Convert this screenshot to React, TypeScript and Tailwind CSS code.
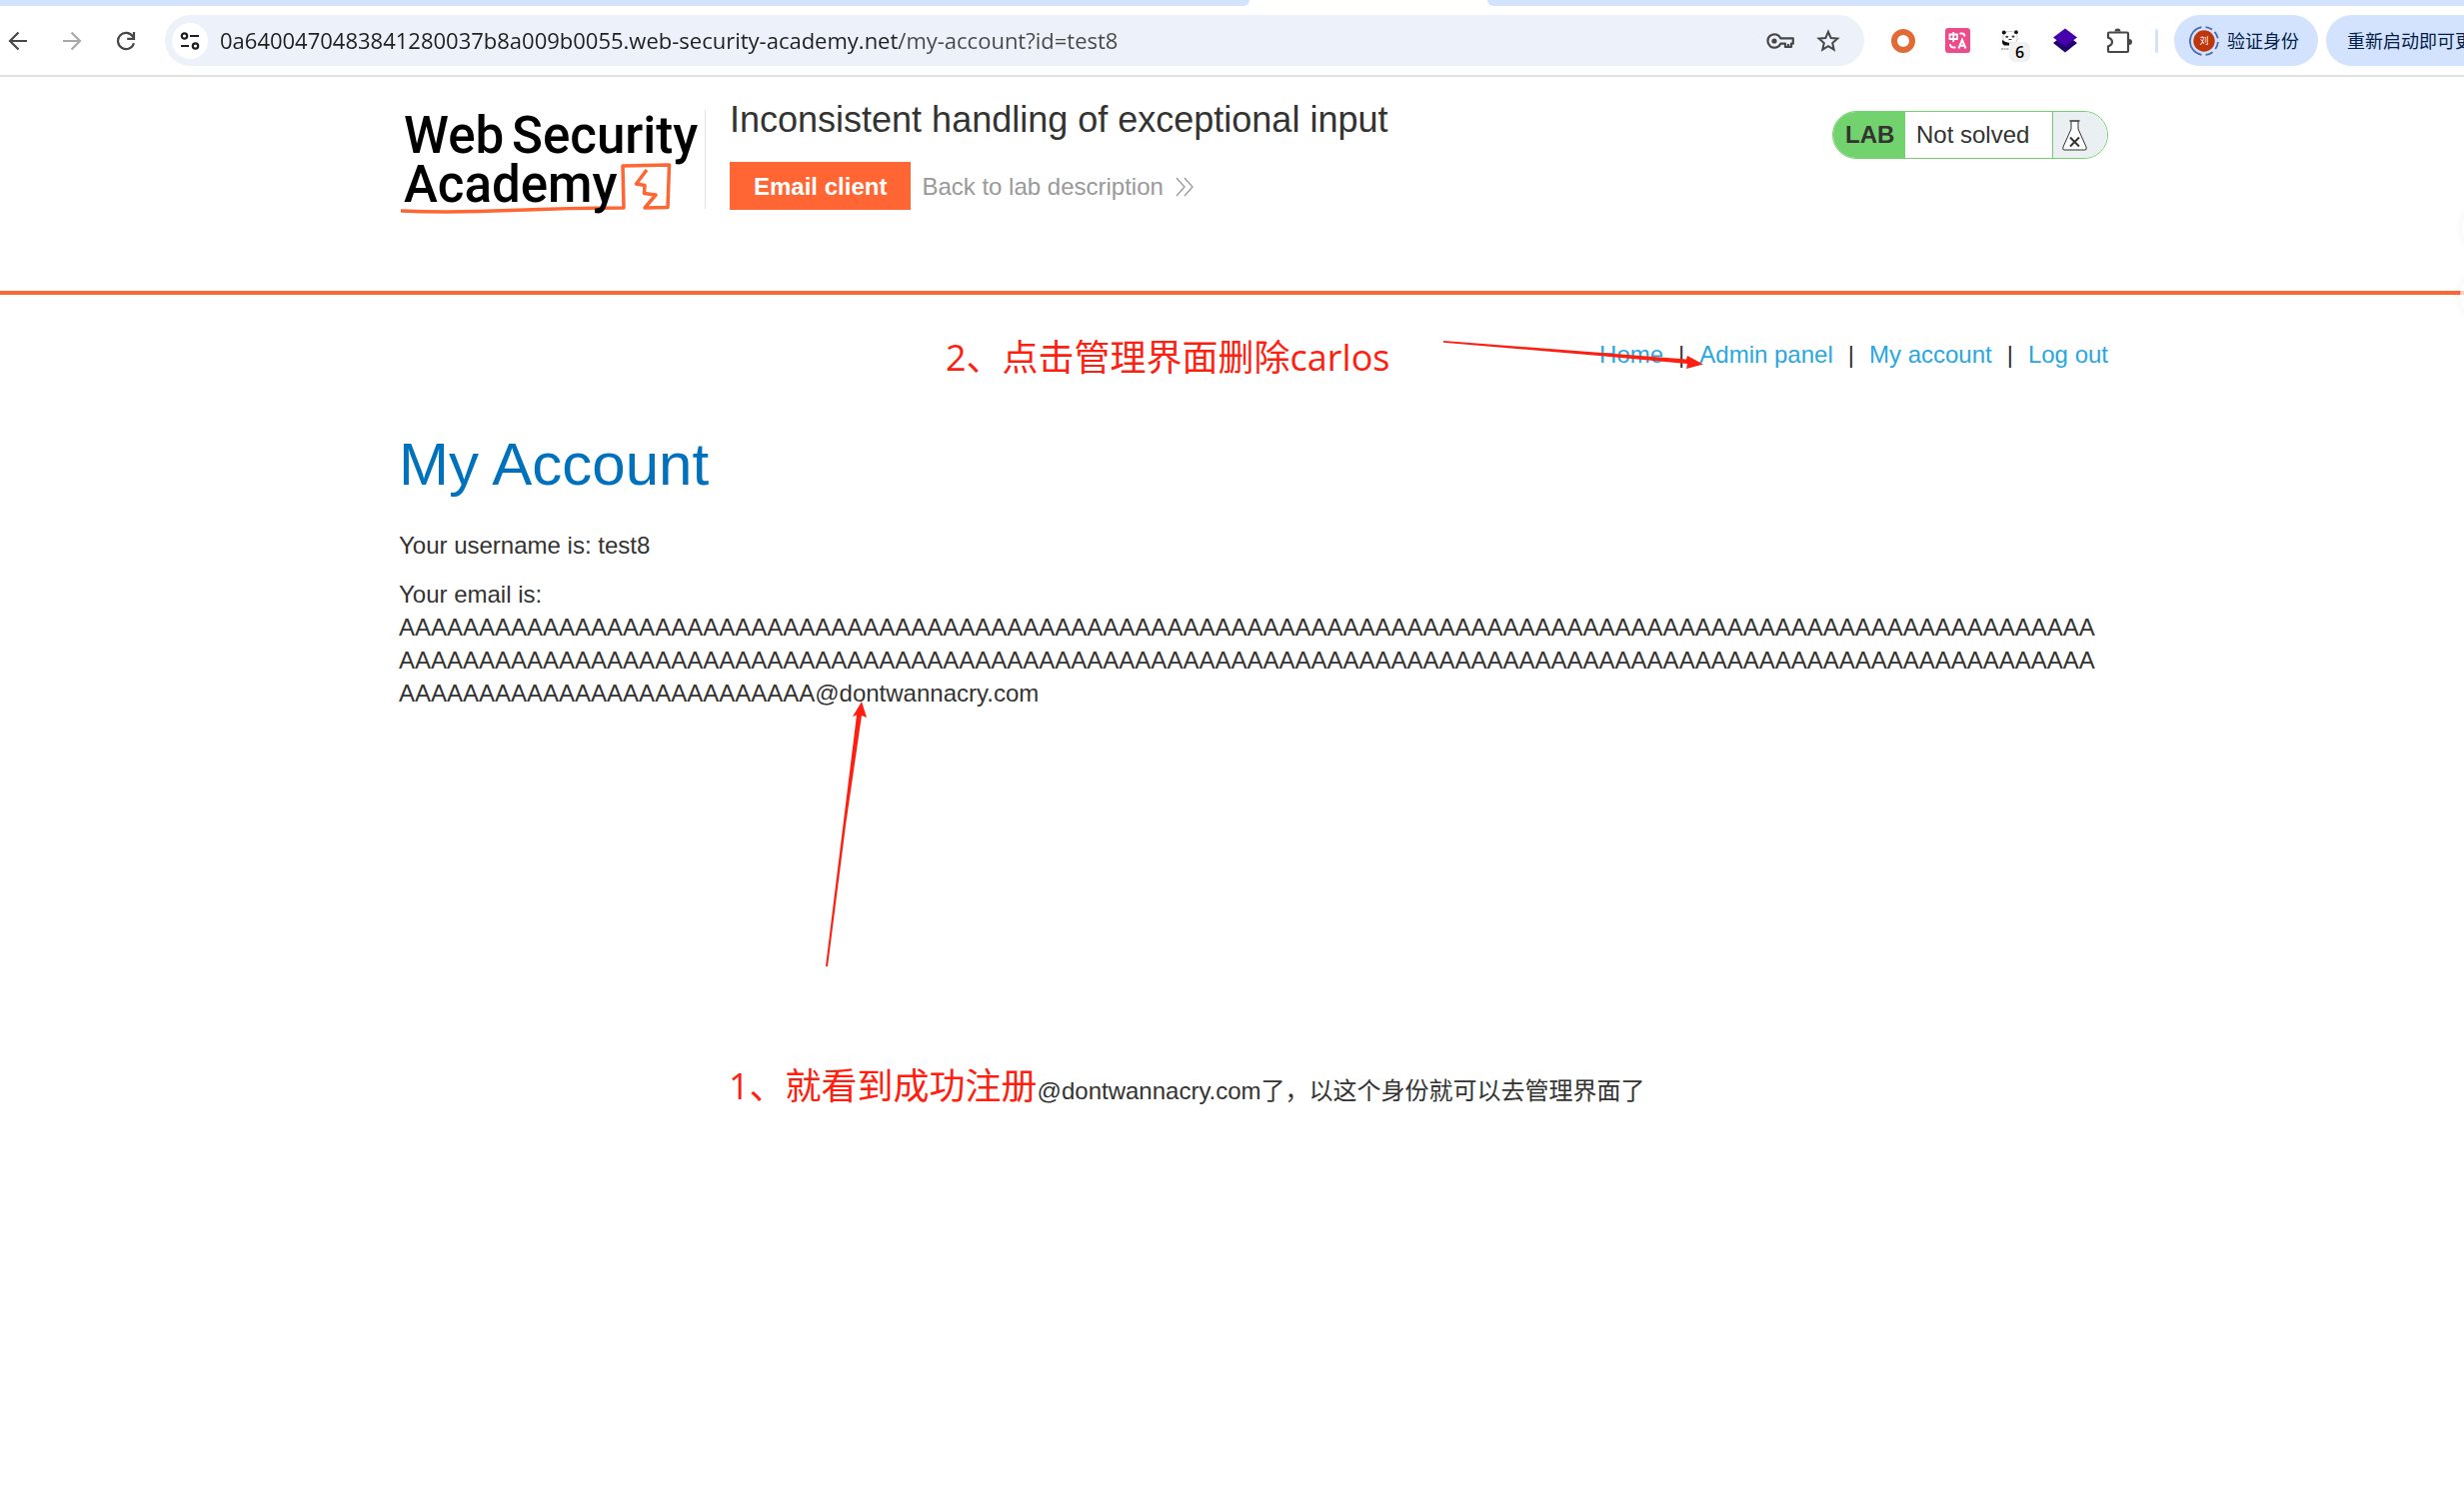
import { ReactNode } from 'react';

const EMAIL = 'A'.repeat(238) + '@dontwannacry.com';

const NAV_LINKS = ['Home', 'Admin panel', 'My account', 'Log out'];

function ToolbarButton({ label, children }: { label: string; children: ReactNode }) {
  return (
    <button aria-label={label} className="flex size-9 shrink-0 items-center justify-center">
      {children}
    </button>
  );
}

function BackIcon() {
  return (
    <svg width="20" height="20" viewBox="0 0 20 20" fill="none" stroke="#474747" strokeWidth="2.2">
      <path d="M19 10H2.5M10.5 1.5 2 10l8.5 8.5" />
    </svg>
  );
}

function ForwardIcon() {
  return (
    <svg width="20" height="20" viewBox="0 0 20 20" fill="none" stroke="#a9a9a9" strokeWidth="2.2">
      <path d="M1 10h16.5M9.5 1.5 18 10l-8.5 8.5" />
    </svg>
  );
}

function ReloadIcon() {
  return (
    <svg width="20" height="20" viewBox="0 0 20 20" fill="none" stroke="#474747" strokeWidth="2.2">
      <path d="M17.9 12.2A8.1 8.1 0 1 1 16.8 5.4L18 7.2" />
      <path d="M18 1v6.8h-6.8" />
    </svg>
  );
}

function TuneIcon() {
  return (
    <svg width="20" height="20" viewBox="0 0 20 20" fill="none" stroke="#1f1f1f" strokeWidth="2.2">
      <circle cx="4.5" cy="5" r="2.7" />
      <path d="M10 5h9M1 15h8" />
      <circle cx="15.5" cy="15" r="2.7" />
    </svg>
  );
}

function KeyIcon() {
  return (
    <svg width="28" height="16" viewBox="0 0 28 16" fill="none" stroke="#474747" strokeWidth="2.2">
      <path d="M14.3 5.3A6.7 6.7 0 1 0 14.3 10.7H19V14h6v-3.3h1.8V5.3Z" strokeLinejoin="round" />
      <path d="M22 14v-3" />
      <circle cx="8" cy="8" r="2.6" fill="#474747" stroke="none" />
    </svg>
  );
}

function StarIcon() {
  return (
    <svg width="24" height="24" viewBox="0 0 24 24" fill="none" stroke="#474747" strokeWidth="2">
      <path d="M12 2.8l2.6 6.2 6.7.6-5.1 4.4 1.500 6.600-5.700-3.500-5.700 3.500 1.500-6.600-5.100-4.400 6.700-.6Z" />
    </svg>
  );
}

function TranslateIcon() {
  return (
    <svg width="25" height="25" viewBox="0 0 25 25" fill="none" stroke="#fff" strokeWidth="1.8">
      <rect width="25" height="25" rx="3" fill="#ee4b8b" stroke="none" />
      <path d="M4.5 6.5h7.5v4.5H4.5ZM8.2 4v10" />
      <path d="M13.5 20.5 17 12l3.5 8.5M14.7 17.7h4.6" strokeWidth="2" />
      <path d="M14.5 5.5h2.5q2.5 0 2.5 3M5 16q0 3.5 3 3.5h2.5" />
    </svg>
  );
}

function PandaIcon() {
  return (
    <svg width="18" height="21" viewBox="0 0 18 21">
      <path d="M2 5Q3 1.5 9 1.5T16 5q1 6-2 8H5Q1 11 2 5Z" fill="#fff" stroke="#b5b5b5" strokeWidth=".7" />
      <circle cx="2.8" cy="2.4" r="2" fill="#111" />
      <circle cx="15" cy="2.2" r="1.9" fill="#111" />
      <ellipse cx="5.8" cy="6.8" rx="1.6" ry="1.1" fill="#444" />
      <ellipse cx="12" cy="6.6" rx="1.6" ry="1.1" fill="#444" />
      <path d="M7.5 9.5h3" stroke="#333" />
      <path d="M1 10q2 2 7 3v2.5H3Q.5 14 1 10Z" fill="#111" />
      <path d="M0 19h8" stroke="#777" strokeWidth="1.2" strokeDasharray="2 .6" />
    </svg>
  );
}

function LayersIcon() {
  return (
    <svg width="26" height="25" viewBox="0 0 26 25">
      <path d="M1 15 13 6l12 9-12 9.5Z" fill="#23006e" />
      <path d="M1 9.5 13 .5l12 9-12 9Z" fill="#4500ad" />
    </svg>
  );
}

function PuzzleIcon() {
  return (
    <svg width="26" height="26" viewBox="0 0 26 26" fill="none" stroke="#474747" strokeWidth="2.2">
      <path
        d="M3 4.5h18q1 0 1 1V23q0 1-1 1H3q-1 0-1-1v-4.6q4-1.3 4-4.400t-4-4.400V5.500q0-1 1-1Z"
        strokeLinejoin="round"
      />
      <path d="M8.500 3.500a3 3 0 0 1 6 0ZM23 11a3 3 0 0 1 0 6Z" fill="#474747" stroke="none" />
    </svg>
  );
}

function Avatar() {
  return (
    <span className="relative flex size-[30px] items-center justify-center">
      <svg className="absolute inset-0" width="30" height="30" viewBox="0 0 30 30" fill="none">
        <path d="M12.5 1.2a14 14 0 0 0 0 27.6" stroke="#4a6cae" strokeWidth="1.8" />
        <path
          d="M16.5 1.1a14 14 0 0 1 6.500 2.500M25.500 5.800a14 14 0 0 1 3.300 6.500M28.900 16a14 14 0 0 1-2.600 7M23.500 26.200a14 14 0 0 1-7 2.700"
          stroke="#4a6cae"
          strokeWidth="1.8"
        />
        <circle cx="15" cy="15" r="10.7" fill="#bf360c" />
      </svg>
      <span className="relative text-[9px] leading-none text-white">刘</span>
    </span>
  );
}

function TabStrip() {
  return (
    <div className="flex h-1.5 bg-white">
      <div className="w-[1250px] rounded-br-lg bg-[#d3e3fd]" />
      <div className="ml-[238px] flex-1 rounded-bl-lg bg-[#d3e3fd]" />
    </div>
  );
}

function Toolbar() {
  return (
    <div className="flex h-[71px] items-center overflow-hidden border-b-2 border-[#e1e1e1] font-['Open_Sans','Noto_Sans_CJK_SC',sans-serif]">
      <div className="flex shrink-0 gap-[18px] pr-[21px]">
        <ToolbarButton label="Back">
          <BackIcon />
        </ToolbarButton>
        <ToolbarButton label="Forward">
          <ForwardIcon />
        </ToolbarButton>
        <ToolbarButton label="Reload">
          <ReloadIcon />
        </ToolbarButton>
      </div>
      <div className="flex h-[51px] min-w-0 flex-1 items-center gap-3 rounded-full bg-[#ecf1fa] pr-[18px] pl-[7px]">
        <button
          aria-label="View site information"
          className="flex size-9 shrink-0 items-center justify-center rounded-full bg-white"
        >
          <TuneIcon />
        </button>
        <input
          aria-label="Address"
          defaultValue="0a6400470483841280037b8a009b0055.web-security-academy.net/my-account?id=test8"
          className="min-w-0 flex-1 bg-[linear-gradient(90deg,#1f1f1f_680px,#474747_680px)] bg-clip-text text-[22px] text-transparent outline-none"
        />
        <div className="flex shrink-0 gap-3">
          <ToolbarButton label="Passwords">
            <KeyIcon />
          </ToolbarButton>
          <ToolbarButton label="Bookmark">
            <StarIcon />
          </ToolbarButton>
        </div>
      </div>
      <div className="flex shrink-0 items-center gap-[18px] pr-4 pl-[21px]">
        <ToolbarButton label="Ring extension">
          <span className="size-6 rounded-full border-[6px] border-[#e06b34]" />
        </ToolbarButton>
        <ToolbarButton label="Translate">
          <TranslateIcon />
        </ToolbarButton>
        <button aria-label="Panda" className="relative flex size-9 items-center pl-2">
          <PandaIcon />
          <span className="absolute top-[19px] left-4 flex h-5 w-[21px] items-center justify-center rounded-md bg-[#f1f1f1] text-base font-semibold text-black">
            6
          </span>
        </button>
        <ToolbarButton label="Layers">
          <LayersIcon />
        </ToolbarButton>
        <ToolbarButton label="Extensions">
          <PuzzleIcon />
        </ToolbarButton>
        <span className="h-6 w-[3px] rounded-full bg-[#d3e3fd]" />
      </div>
      <div className="flex w-[290px] shrink-0 gap-2 text-lg text-[#041e49]">
        <button className="flex h-[51px] w-36 shrink-0 items-center gap-2 rounded-full bg-[#d3e3fd] pl-[15px]">
          <Avatar />
          验证身份
        </button>
        <button className="h-[51px] shrink-0 rounded-full bg-[#d3e3fd] px-[21px] whitespace-nowrap">
          重新启动即可更新
        </button>
      </div>
    </div>
  );
}

function Logo() {
  return (
    <a href="#" className="relative block w-[307px] border-r border-[#e3e3e3] pl-[5px] font-['Roboto',sans-serif]">
      <svg className="absolute top-[51px] left-0" width="276" height="54" viewBox="0 0 276 54" fill="none">
        <path
          d="M2 50Q52 52 112 49.500T225 47L224 5 270.500 4 269 46.500 246 47 257 34 245.500 32.500 246 24.500 237.500 23 248 9"
          stroke="#f63"
          strokeWidth="3.5"
          strokeLinejoin="round"
        />
      </svg>
      <span className="relative flex gap-2 pt-px text-[51px] leading-[49px] font-medium text-black">
        <span>Web</span>
        <span>Security</span>
      </span>
      <span className="relative block text-[51px] leading-[49px] font-medium text-black">Academy</span>
    </a>
  );
}

function LabStatus() {
  return (
    <div className="flex h-12 overflow-hidden rounded-full border border-[#72d26e] text-2xl">
      <span className="flex w-[72px] items-center bg-[#72d26e] pl-3 font-bold">LAB</span>
      <span className="flex w-[148px] items-center border-r border-[#72d26e] bg-white pl-[11px]">Not solved</span>
      <span className="flex w-[54px] items-center bg-[#eaeff2] pl-[9px]">
        <svg width="25" height="31" viewBox="0 0 25 31" fill="none" stroke="#333332">
          <path d="M9 1.5V9L1 27q-1 3 1 3h21q2 0 1-3L16 9V1.5" fill="#fff" />
          <path d="M7.5 1h10" strokeWidth="1.5" />
          <path d="m8 17.5 9 9M17 17.5l-9 9" strokeWidth="2" />
        </svg>
      </span>
    </div>
  );
}

function LabHeader() {
  return (
    <header className="border-b-4 border-[#f63] pt-[25px] pr-[356px] pb-[60px] pl-[399px]">
      <div className="flex h-[129px] items-start">
        <div className="pt-2">
          <Logo />
        </div>
        <div className="ml-6 flex-1">
          <h2 className="text-4xl leading-[36px]">Inconsistent handling of exceptional input</h2>
          <div className="mt-6 flex items-center gap-[11px] text-2xl">
            <button className="h-12 bg-[#f63] px-6 pt-0.5 font-bold text-white">Email client</button>
            <a href="#" className="flex items-center gap-3 pt-0.5 text-[#999]">
              Back to lab description
              <svg width="18" height="20" viewBox="0 0 18 20" fill="none" stroke="#999" strokeWidth="1.3">
                <path d="m1 1 8 9-8 9M9 1l8 9-8 9" />
              </svg>
            </a>
          </div>
        </div>
        <div className="pt-[9px]">
          <LabStatus />
        </div>
      </div>
    </header>
  );
}

// Red notes and arrows drawn over the page
function Annotations() {
  return (
    <>
      <p className="absolute top-[334px] left-[946px] font-['Open_Sans','Noto_Sans_CJK_SC',sans-serif] text-4xl leading-[48px] text-[#ff1e10]">
        2、点击管理界面删除carlos
      </p>
      <p className="absolute top-[1067px] left-[729px] leading-[48px]">
        <span className="font-['Open_Sans','Noto_Sans_CJK_SC',sans-serif] text-4xl text-[#ff1e10]">
          1、就看到成功注册
        </span>
        <span className="text-2xl">@dontwannacry.com了，以这个身份就可以去管理界面了</span>
      </p>
      <svg className="absolute top-[338px] left-[1440px]" width="270" height="34" viewBox="0 0 270 34" fill="#ff1e10">
        <path d="M4 3 247 21.5 248 18l16 8.500-17 4.500 1-5L160 18 4 4.800Z" />
      </svg>
      <svg className="absolute top-[700px] left-[820px]" width="56" height="270" viewBox="0 0 56 270" fill="#ff1e10">
        <path d="M6 267 37 15.500 33 17 42 2 47 18 42 16 26 126 8 267Z" />
      </svg>
    </>
  );
}

function EdgeWidgets() {
  return (
    <div className="absolute top-[204px] left-full -ml-0.5">
      <div className="size-12 rounded-full bg-white/70 shadow-[0_0_12px_rgba(0,0,0,0.06)]" />
      <div className="mt-5 -ml-0.5 size-12 rounded-full bg-white/70 shadow-[0_0_12px_rgba(0,0,0,0.06)]" />
    </div>
  );
}

export default function App() {
  return (
    <div className="relative min-h-screen overflow-hidden bg-white font-['Liberation_Sans','Noto_Sans_CJK_SC',sans-serif] text-[#333332]">
      <TabStrip />
      <Toolbar />
      <LabHeader />
      <main className="pt-[43px] pr-[356px] pl-[399px] text-2xl leading-[33px]">
        <nav className="flex justify-end gap-[15px]">
          {NAV_LINKS.map((link, i) => (
            <span key={link} className="flex gap-[15px]">
              {i > 0 && <span>|</span>}
              <a href="#" className="text-[#29a7df]">
                {link}
              </a>
            </span>
          ))}
        </nav>
        <h1 className="mt-[58px] text-6xl leading-[72px] text-[#0071bc]">My Account</h1>
        <p className="mt-7">Your username is: test8</p>
        <p className="mt-4 break-words">Your email is: {EMAIL}</p>
      </main>
      <Annotations />
      <EdgeWidgets />
    </div>
  );
}
